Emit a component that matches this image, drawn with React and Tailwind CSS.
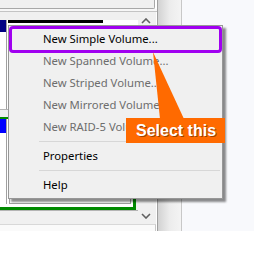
import React from 'react'

const Chevron = ({ down }) => (
  <svg width="10" height="6" viewBox="0 0 10 6" className="block">
    <path
      d={down ? 'M1 1 L5 5 L9 1' : 'M1 5 L5 1 L9 5'}
      fill="none"
      stroke="#606060"
      strokeWidth="1.6"
    />
  </svg>
)

const items = [
  { label: 'New Simple Volume...', enabled: true },
  { label: 'New Spanned Volume...', enabled: false },
  { label: 'New Striped Volume...', enabled: false },
  { label: 'New Mirrored Volume...', enabled: false },
  { label: 'New RAID-5 Volume...', enabled: false },
  { sep: true },
  { label: 'Properties', enabled: true },
  { sep: true },
  { label: 'Help', enabled: true },
]

const LeftPane = () => (
  <div className="w-[157px] flex flex-col">
    {/* upper panel's horizontal scrollbar */}
    <div className="flex h-[9px]">
      <div className="w-[155px] bg-[#f0f0f0] border-b border-r border-[#a8a8a8] rounded-br-[2px]" />
      <div className="flex-1 bg-white" />
    </div>
    <div className="h-[3px] bg-[#f7f7f7] border-b border-[#c4c4c4]" />

    <div className="flex flex-1">
      {/* disk list */}
      <div className="w-[138px] flex flex-col bg-[#f0f0f0]">
        <div className="h-[8px]" />
        {/* disk row 1 */}
        <div className="h-[89px] flex bg-white">
          <div className="w-[6px] flex flex-col">
            <div className="h-[12px] bg-[#000082]" />
          </div>
          <div className="w-px bg-[#a0a0a0]" />
          <div className="flex-1 pl-px">
            <div className="w-[95px] h-[3px] bg-black" />
          </div>
        </div>
        <div className="h-[8px] bg-[#f0f0f0] border-t border-[#b4b4b4]" />
        {/* disk row 2 */}
        <div className="h-[93px] w-[136px] flex bg-white border-t-2 border-r-[3px] border-b-[3px] border-[#008a00]">
          <div className="w-[6px] flex flex-col">
            <div className="h-[14px] bg-[#0000ff]" />
          </div>
          <div className="w-px bg-[#a0a0a0] mb-[3px]" />
          <div className="flex-1 p-[2px] pb-[3px] flex">
            <div className="flex-1 border-l border-b border-r border-[#a0a0a0]" />
          </div>
        </div>
        <div className="h-[14px] bg-[#f0f0f0] border-t border-[#b4b4b4]" />
        <div className="flex-1 bg-[#fafafa] border-t border-[#d8d8d8]" />
      </div>
      {/* vertical scrollbar */}
      <div className="w-[18px] flex flex-col">
        <div className="h-[212px] bg-[#f0f0f0] flex flex-col items-center justify-between pt-[6px] pb-[5px] pr-[2px]">
          <Chevron />
          <Chevron down />
        </div>
        <div className="flex-1 bg-[#fafafa] border-t border-[#d8d8d8] border-r border-r-[#c8c8c8]" />
      </div>
      <div className="w-px bg-white" />
    </div>
  </div>
)

const ContextMenu = () => (
  <div className="absolute left-[8px] top-[25px] w-[215px] h-[174px] bg-[#f0f0f0] border border-[#979797] shadow-[3px_3px_2px_rgba(0,0,0,0.45)] py-[2px]">
    {items.map((it, i) =>
      it.sep ? (
        <div key={i} className="h-[7px] flex items-center pl-[30px] pr-[2px]">
          <div className="h-px w-full bg-[#d7d7d7]" />
        </div>
      ) : (
        <div
          key={i}
          className={
            'h-[22px] flex items-center pl-[34px] text-[11.3px] whitespace-nowrap ' +
            (it.enabled ? 'text-[#000000]' : 'text-[#6d6d6d]')
          }
        >
          {it.label}
        </div>
      )
    )}
    <div className="absolute left-0 top-0 w-[213px] h-[27px] border-[3px] border-[#a000f0] rounded-[4px]" />
  </div>
)

const Callout = () => (
  <>
    <svg
      width="36"
      height="70"
      viewBox="0 0 36 70"
      className="absolute left-[150px] top-[50px]"
    >
      <polygon points="3,2 10,69 34,69" fill="#ff6a00" />
    </svg>
    <div className="absolute left-[126px] top-[118px] w-[99px] h-[25px] bg-[#ff6a00] flex items-center pl-[10px]">
      <span
        className="text-white font-bold text-[16px] leading-none [text-shadow:1px_1px_0_#a04000]"
        style={{ fontFamily: '"Liberation Sans", Arial, sans-serif' }}
      >
        Select this
      </span>
    </div>
  </>
)

export default function App() {
  return (
    <div
      className="relative w-[254px] h-[256px] overflow-hidden bg-white"
      style={{ fontFamily: '"Noto Sans", "Open Sans", sans-serif' }}
    >
      <div className="flex h-[231px]">
        <LeftPane />
        <div className="w-px bg-[#a0a0a0]" />
        <div className="w-[24px] bg-gradient-to-r from-[#d2d2d2] via-[#ececec] to-[#f4f4f4] border-r border-[#c8c8c8]" />
        <div className="flex-1 bg-[#f8f9fc]" />
      </div>
      <ContextMenu />
      <Callout />
    </div>
  )
}
